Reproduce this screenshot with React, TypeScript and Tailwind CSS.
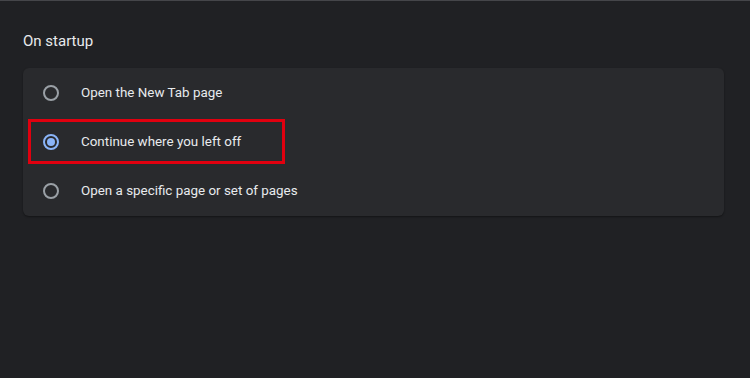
const options = [
  { label: "Open the New Tab page", checked: false },
  { label: "Continue where you left off", checked: true },
  { label: "Open a specific page or set of pages", checked: false },
]

const Radio = ({ checked }: { checked: boolean }) => {
  if (checked) {
    return (
      <span className="flex h-4 w-4 shrink-0 items-center justify-center rounded-full border-2 border-[#8ab4f8]">
        <span className="h-2 w-2 rounded-full bg-[#8ab4f8]" />
      </span>
    )
  }
  return <span className="h-4 w-4 shrink-0 rounded-full border-2 border-[#9aa0a6]" />
}

const App = () => {
  return (
    <div
      className="h-[378px] w-[750px] overflow-hidden border-t border-[#45464a] bg-[#202124] text-[#e8eaed]"
      style={{ fontFamily: "Roboto, 'Liberation Sans', sans-serif" }}
    >
      <div className="px-[23px] pt-[31px]">
        <h2 className="text-[15px] leading-[18px]">On startup</h2>
        <div className="mt-[18px] grid h-[148px] w-[701px] grid-rows-3 rounded-[6px] bg-[#292a2d] shadow-[0_1px_2px_rgba(0,0,0,0.4)]">
          {options.map((o) => (
            <div key={o.label} className="flex items-center px-[5px]">
              <div
                className={
                  "flex h-[45px] items-center pl-[12px] " +
                  (o.checked ? "w-[257px] border-[3px] border-[#e1000f]" : "border-[3px] border-transparent")
                }
              >
                <Radio checked={o.checked} />
                <span className="ml-[22px] whitespace-nowrap text-[13.4px]">{o.label}</span>
              </div>
            </div>
          ))}
        </div>
      </div>
    </div>
  )
}

export default App
